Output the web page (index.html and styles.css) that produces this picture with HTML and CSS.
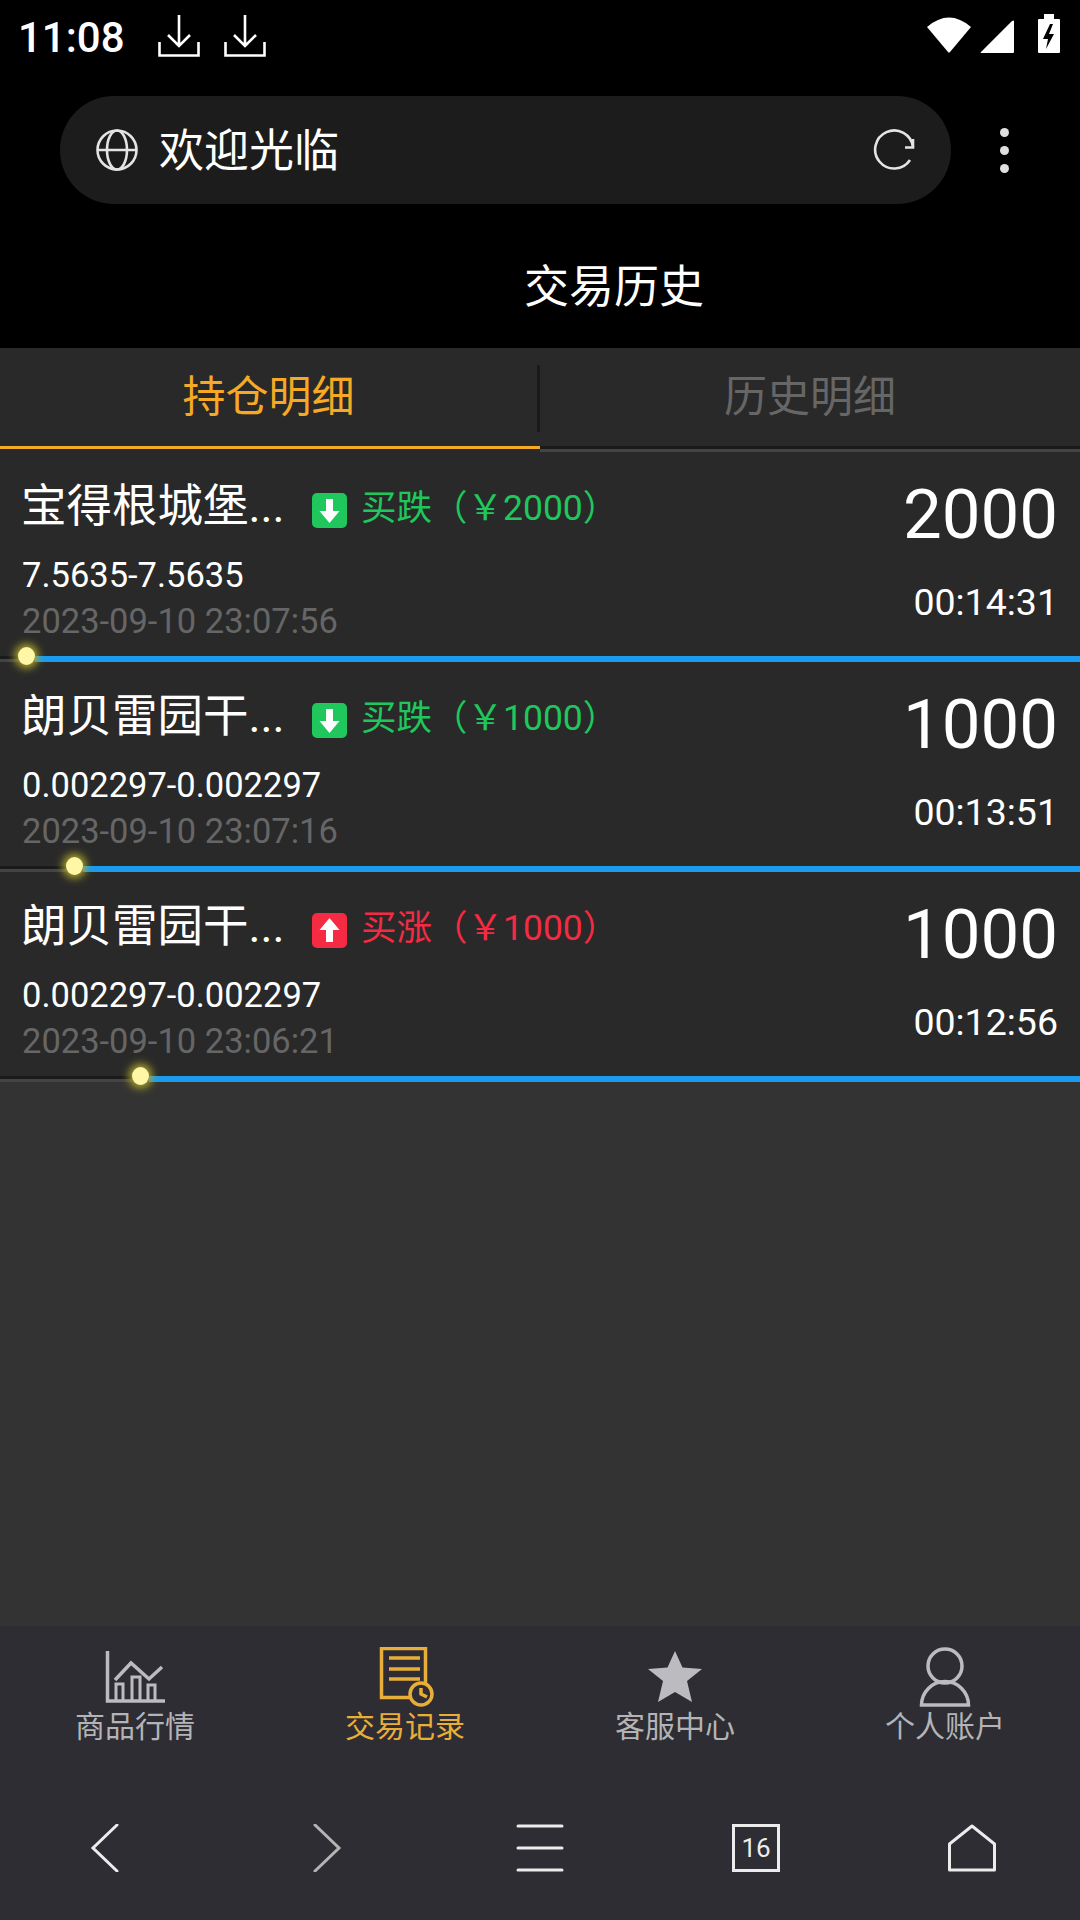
FILE: index.html

```html
<!DOCTYPE html>
<html lang="zh-CN">
<head>
    <meta charset="UTF-8">
    <meta name="viewport" content="width=device-width, initial-scale=1.0">
    <title>交易历史</title>
    <link rel="stylesheet" href="styles.css">
</head>
<body>
    <div class="status-bar">
        <span class="clock">11:08</span>
        <svg class="st-download" viewBox="0 0 42 42"><path d="M21 0v31M10 20l11 11 11-11M1.500 27v13.500h39V27" fill="none" stroke="#fff" stroke-width="2.600"/></svg>
        <svg class="st-download" viewBox="0 0 42 42"><path d="M21 0v31M10 20l11 11 11-11M1.500 27v13.500h39V27" fill="none" stroke="#fff" stroke-width="2.600"/></svg>
        <svg class="st-wifi" viewBox="0 0 46 36"><path d="M1 10Q23-9 45 10L24 35q-1 1-2 0z" fill="#fff"/></svg>
        <svg class="st-signal" viewBox="0 0 34 33"><path d="M34 1v31q0 1-1 1H1q-1 0 0-1L32 1q2-1 2 0z" fill="#fff"/></svg>
        <svg class="st-battery" viewBox="0 0 22 39"><path fill-rule="evenodd" d="M6 0h10v5h5q1 0 1 1v32q0 1-1 1H1q-1 0-1-1V6q0-1 1-1h5zM12 10l-7 15h5l-2 10 8-15h-5l4-10z" fill="#fff"/></svg>
    </div>

    <div class="url-row">
        <div class="url-box">
            <svg class="globe" viewBox="0 0 42 42" fill="none" stroke="#e4e4e4" stroke-width="2.600">
                <circle cx="21" cy="21" r="19.500"/>
                <ellipse cx="21" cy="21" rx="10" ry="19.500"/>
                <path d="M2 21h38"/>
            </svg>
            <span class="url-text">欢迎光临</span>
            <svg class="reload" viewBox="0 0 44 42" fill="none" stroke="#e4e4e4" stroke-width="2.600">
                <path d="M37 31A19 19 0 1 1 40 18"/>
                <path d="M40 10v8.500h-8"/>
            </svg>
        </div>
        <div class="more"><i></i><i></i><i></i></div>
    </div>

    <div class="page-title">交易历史</div>

    <div class="tabs">
        <div class="tab tab-on">持仓明细</div>
        <div class="tab-sep"></div>
        <div class="tab">历史明细</div>
    </div>
    <div class="tab-rule"><span class="rule-on"></span><span class="rule-off"></span></div>

    <div class="list">
        <div class="order">
            <div class="order-body">
                <div class="order-left">
                    <div class="order-head">
                        <span class="name">宝得根城堡...</span>
                        <svg class="badge badge-down" viewBox="0 0 35 35"><path d="M14 6h7v12h6.500L17.500 30 7.500 18H14z" fill="#fff"/></svg>
                        <span class="dir down">买跌（￥2000）</span>
                    </div>
                    <div class="price">7.5635-7.5635</div>
                    <div class="date">2023-09-10 23:07:56</div>
                </div>
                <div class="order-right">
                    <div class="amount">2000</div>
                    <div class="timer">00:14:31</div>
                </div>
            </div>
            <div class="track">
                <div class="bar" style="width: 1045px"><span class="dot"></span></div>
            </div>
        </div>

        <div class="order">
            <div class="order-body">
                <div class="order-left">
                    <div class="order-head">
                        <span class="name">朗贝雷园干...</span>
                        <svg class="badge badge-down" viewBox="0 0 35 35"><path d="M14 6h7v12h6.500L17.500 30 7.500 18H14z" fill="#fff"/></svg>
                        <span class="dir down">买跌（￥1000）</span>
                    </div>
                    <div class="price">0.002297-0.002297</div>
                    <div class="date">2023-09-10 23:07:16</div>
                </div>
                <div class="order-right">
                    <div class="amount">1000</div>
                    <div class="timer">00:13:51</div>
                </div>
            </div>
            <div class="track">
                <div class="bar" style="width: 997px"><span class="dot"></span></div>
            </div>
        </div>

        <div class="order">
            <div class="order-body">
                <div class="order-left">
                    <div class="order-head">
                        <span class="name">朗贝雷园干...</span>
                        <svg class="badge badge-up" viewBox="0 0 35 35"><path d="M14 29h7V17h6.500L17.500 5 7.500 17H14z" fill="#fff"/></svg>
                        <span class="dir up">买涨（￥1000）</span>
                    </div>
                    <div class="price">0.002297-0.002297</div>
                    <div class="date">2023-09-10 23:06:21</div>
                </div>
                <div class="order-right">
                    <div class="amount">1000</div>
                    <div class="timer">00:12:56</div>
                </div>
            </div>
            <div class="track">
                <div class="bar" style="width: 931px"><span class="dot"></span></div>
            </div>
        </div>
    </div>

    <div class="tabbar">
        <div class="tabbar-item">
            <svg class="tabbar-icon" viewBox="0 0 60 60" fill="none" stroke="#bcbcc0" stroke-width="3.500">
                <path d="M2.500 4v50H60"/>
                <path d="M11 54V37h7v17M27 54V30h8v24M43 54V38h7v16" stroke-width="3"/>
                <path d="M10 33l16-17 18 16 13-12"/>
            </svg>
            <span>商品行情</span>
        </div>
        <div class="tabbar-item tabbar-on">
            <svg class="tabbar-icon" viewBox="0 0 60 60" fill="none" stroke="#e9ae38" stroke-width="3.500">
                <path d="M6.500 1.500h44v49h-44z"/>
                <path d="M14 11h31M14 22h31M14 32h31"/>
                <circle cx="46" cy="47" r="11" fill="#2d2d33"/>
                <path d="M46 41v6l6 3"/>
            </svg>
            <span>交易记录</span>
        </div>
        <div class="tabbar-item">
            <svg class="tabbar-icon" viewBox="0 0 60 60">
                <path d="M30 4l7.500 16.500L57 22 42 34l5 21-17-10-17 10 5-21L3 22l19.500-1.500z" fill="#bcbcc0"/>
            </svg>
            <span>客服中心</span>
        </div>
        <div class="tabbar-item">
            <svg class="tabbar-icon" viewBox="0 0 60 60" fill="none" stroke="#bcbcc0" stroke-width="3.500">
                <circle cx="30" cy="19" r="17"/>
                <path d="M6.500 58h47a23.500 23.500 0 0 0-47 0z"/>
            </svg>
            <span>个人账户</span>
        </div>
    </div>

    <div class="browser-nav">
        <svg class="nav-icon" viewBox="0 0 48 48" fill="none" stroke="#ececec" stroke-width="3" stroke-linecap="round"><path d="M33 1L9 24l24 23"/></svg>
        <svg class="nav-icon" viewBox="0 0 48 48" fill="none" stroke="#b4b4b4" stroke-width="3" stroke-linecap="round"><path d="M15 1l24 23-24 23"/></svg>
        <svg class="nav-icon" viewBox="0 0 48 48" fill="none" stroke="#ececec" stroke-width="3" stroke-linecap="round"><path d="M2 2h44M2 24h44M2 46h44"/></svg>
        <div class="tab-count">16</div>
        <svg class="nav-icon" viewBox="0 0 48 48" fill="none" stroke="#ececec" stroke-width="3" stroke-linejoin="round"><path d="M1.500 20L24 2l22.500 18v26h-45z"/></svg>
    </div>
</body>
</html>
```

FILE: styles.css

```css
* {
    box-sizing: border-box;
}
body {
    font-family: Roboto, "Noto Sans CJK SC", sans-serif;
    margin: 0;
    width: 1080px;
    height: 1920px;
    display: flex;
    flex-direction: column;
    background-color: #000;
    color: #fff;
    overflow: hidden;
}
svg {
    display: block;
    flex-shrink: 0;
}

/* status bar */
.status-bar {
    height: 70px;
    display: flex;
    align-items: flex-start;
    padding-left: 18px;
}
.clock {
    font-size: 42px;
    font-weight: 500;
    line-height: 42px;
    margin-top: 17px;
    width: 140px;
}
.st-download {
    width: 42px;
    height: 42px;
    margin-top: 15px;
    margin-right: 24px;
}
.st-wifi {
    width: 46px;
    height: 36px;
    margin-top: 17px;
    margin-left: auto;
}
.st-signal {
    width: 34px;
    height: 33px;
    margin-top: 20px;
    margin-left: 8px;
}
.st-battery {
    width: 22px;
    height: 39px;
    margin-top: 14px;
    margin-left: 24px;
    margin-right: 20px;
}

/* address bar */
.url-row {
    height: 108px;
    margin-top: 26px;
    padding-left: 60px;
    display: flex;
    align-items: center;
}
.url-box {
    width: 891px;
    height: 108px;
    border-radius: 54px;
    background: #1c1c1c;
    display: flex;
    align-items: center;
    padding-left: 36px;
    padding-right: 34px;
}
.globe {
    width: 42px;
    height: 42px;
}
.url-text {
    font-size: 45px;
    line-height: 50px;
    margin-left: 21px;
    margin-top: 3px;
}
.reload {
    width: 44px;
    height: 42px;
    margin-left: auto;
}
.more {
    margin-left: 49px;
    display: flex;
    flex-direction: column;
    gap: 9px;
}
.more i {
    display: block;
    width: 9px;
    height: 9px;
    border-radius: 50%;
    background: #e0e0e0;
}

.page-title {
    height: 144px;
    padding-left: 148px;
    text-align: center;
    font-size: 45px;
    line-height: 168px;
}

/* tabs */
.tabs {
    height: 98px;
    background: #292929;
    display: flex;
    align-items: center;
}
.tab {
    flex: 1;
    text-align: center;
    font-size: 43px;
    color: #666;
    line-height: 94px;
}
.tab-on {
    flex: none;
    width: 537px;
    color: #f5a924;
}
.tab-sep {
    width: 3px;
    height: 67px;
    margin-top: 2px;
    background: #1a1a1a;
}
.tab-rule {
    height: 6px;
    display: flex;
}
.rule-on {
    width: 540px;
    border-top: 3px solid #f5a924;
    background: #292929;
}
.rule-off {
    flex: 1;
    background: linear-gradient(#1a1a1a 50%, #444 50%);
}

/* order list */
.list {
    flex: 1;
    background: #333;
}
.order-body {
    height: 204px;
    background: #292929;
    display: flex;
    justify-content: space-between;
    padding: 0 22px;
}
.order-head {
    display: flex;
    align-items: center;
    height: 44px;
    margin-top: 32px;
}
.name {
    width: 290px;
    font-size: 45.500px;
    line-height: 44px;
    margin-left: -1px;
    margin-right: 1px;
    margin-top: 2px;
    white-space: nowrap;
}
.badge {
    width: 35px;
    height: 35px;
    border-radius: 5px;
    margin-top: 9px;
}
.badge-down {
    background: #1fc75c;
}
.badge-up {
    background: #f52a43;
}
.dir {
    font-size: 35.500px;
    margin-left: 14px;
    margin-bottom: 4px;
    white-space: nowrap;
}
.down {
    color: #1fc75c;
}
.up {
    color: #f52a43;
}
.price {
    font-size: 34.500px;
    line-height: 46px;
    margin-top: 24px;
}
.date {
    font-size: 34.500px;
    line-height: 46px;
    color: #666;
}
.order-right {
    text-align: right;
}
.amount {
    font-size: 69px;
    line-height: 68px;
    margin-top: 29px;
}
.timer {
    font-size: 37.500px;
    line-height: 40px;
    margin-top: 33px;
}
.track {
    height: 6px;
    display: flex;
    justify-content: flex-end;
    background: linear-gradient(#1a1a1a 50%, #444 50%);
}
.bar {
    position: relative;
    background: #1a9bec;
}
.dot {
    position: absolute;
    left: -17px;
    top: -9px;
    width: 17px;
    height: 18px;
    border-radius: 50%;
    background: #fff6a8;
    box-shadow: 0 0 8px 3px #b3ac2e;
}

/* bottom tabs */
.tabbar {
    height: 150px;
    background: #2d2d33;
    display: flex;
    padding-top: 21px;
}
.tabbar-item {
    flex: 1;
    display: flex;
    flex-direction: column;
    align-items: center;
    font-size: 30px;
    line-height: 36px;
    color: #b4b4b6;
}
.tabbar-item span {
    margin-top: 2px;
}
.tabbar-icon {
    width: 60px;
    height: 60px;
}
.tabbar-on {
    color: #e9ae38;
}

/* browser nav */
.browser-nav {
    height: 144px;
    background: #2d2d33;
    display: grid;
    grid-template-columns: repeat(5, 1fr);
    justify-items: center;
    align-items: center;
}
.nav-icon {
    width: 48px;
    height: 48px;
}
.tab-count {
    width: 48px;
    height: 48px;
    border: 3px solid #ececec;
    text-align: center;
    font-size: 26px;
    line-height: 42px;
    color: #ececec;
}
```
